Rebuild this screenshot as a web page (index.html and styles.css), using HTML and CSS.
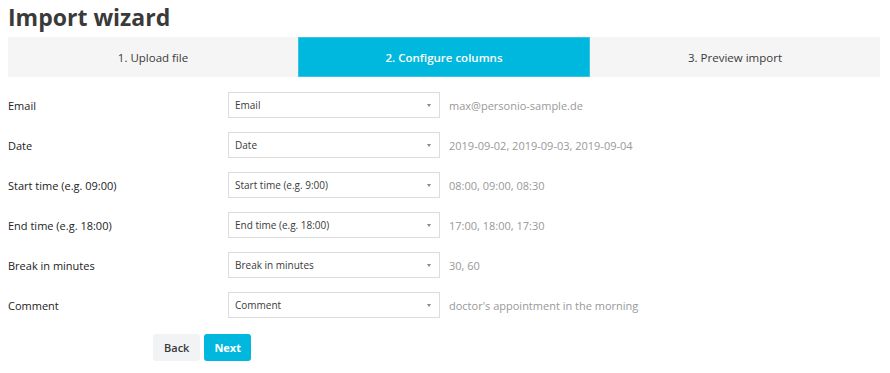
FILE: index.html
```html
<!DOCTYPE html>
<html lang="en">
<head>
  <meta charset="UTF-8" />
  <title>Import wizard</title>
  <link rel="stylesheet" href="styles.css">
</head>
<body>

  <h1>Import wizard</h1>

  <div class="steps">
    <div class="step">1. Upload file</div>
    <div class="step active">2. Configure columns</div>
    <div class="step">3. Preview import</div>
  </div>

  <div class="mapping">
    <div class="row">
      <label>Email</label>
      <div class="select">Email<span class="caret"></span></div>
      <span class="sample">max@personio-sample.de</span>
    </div>
    <div class="row">
      <label>Date</label>
      <div class="select">Date<span class="caret"></span></div>
      <span class="sample">2019-09-02, 2019-09-03, 2019-09-04</span>
    </div>
    <div class="row">
      <label>Start time (e.g. 09:00)</label>
      <div class="select">Start time (e.g. 9:00)<span class="caret"></span></div>
      <span class="sample">08:00, 09:00, 08:30</span>
    </div>
    <div class="row">
      <label>End time (e.g. 18:00)</label>
      <div class="select">End time (e.g. 18:00)<span class="caret"></span></div>
      <span class="sample">17:00, 18:00, 17:30</span>
    </div>
    <div class="row">
      <label>Break in minutes</label>
      <div class="select">Break in minutes<span class="caret"></span></div>
      <span class="sample">30, 60</span>
    </div>
    <div class="row">
      <label>Comment</label>
      <div class="select">Comment<span class="caret"></span></div>
      <span class="sample">doctor's appointment in the morning</span>
    </div>
  </div>

  <div class="actions">
    <button class="btn">Back</button>
    <button class="btn primary">Next</button>
  </div>

</body>
</html>
```

FILE: styles.css
```css
body {
  font-family: "Open Sans", sans-serif;
  margin: 0;
  padding: 0 10px 0 8px;
  color: #333;
  background: #fff;
}

h1 {
  font-size: 23px;
  font-weight: 700;
  color: #3a3a3a;
  margin: 0;
  height: 37px;
  line-height: 34px;
}

.steps {
  display: flex;
  height: 40px;
  background: #f5f5f5;
}

.step {
  flex: 1;
  display: flex;
  align-items: center;
  justify-content: center;
  font-size: 11.5px;
  color: #3a3a3a;
}

.step.active {
  background: #00b8de;
  border: 1px solid #3cc3e6;
  color: #fff;
  font-weight: 600;
}

.mapping {
  padding-top: 15px;
}

.row {
  display: flex;
  align-items: center;
  height: 26px;
  margin-bottom: 14px;
  font-size: 11px;
}

.row label {
  width: 220px;
  color: #222;
}

.select {
  position: relative;
  width: 204px;
  height: 24px;
  line-height: 24px;
  border: 1px solid #dcdcdc;
  padding-left: 6px;
  font-size: 10px;
  color: #3a3a3a;
}

.caret {
  position: absolute;
  right: 8px;
  top: 11px;
  border-left: 2.5px solid transparent;
  border-right: 2.5px solid transparent;
  border-top: 3px solid #888;
}

.sample {
  margin-left: 9px;
  color: #999;
}

.actions {
  display: flex;
  gap: 4px;
  padding-left: 145px;
  padding-top: 2px;
}

.btn {
  font-family: "Open Sans", sans-serif;
  font-size: 11px;
  font-weight: 600;
  height: 27px;
  padding: 0 11px;
  border: none;
  border-radius: 3px;
  background: #f1f3f5;
  color: #3a3a3a;
}

.btn.primary {
  background: #00b8de;
  color: #fff;
  font-weight: 700;
  padding: 0 10px;
}
```
